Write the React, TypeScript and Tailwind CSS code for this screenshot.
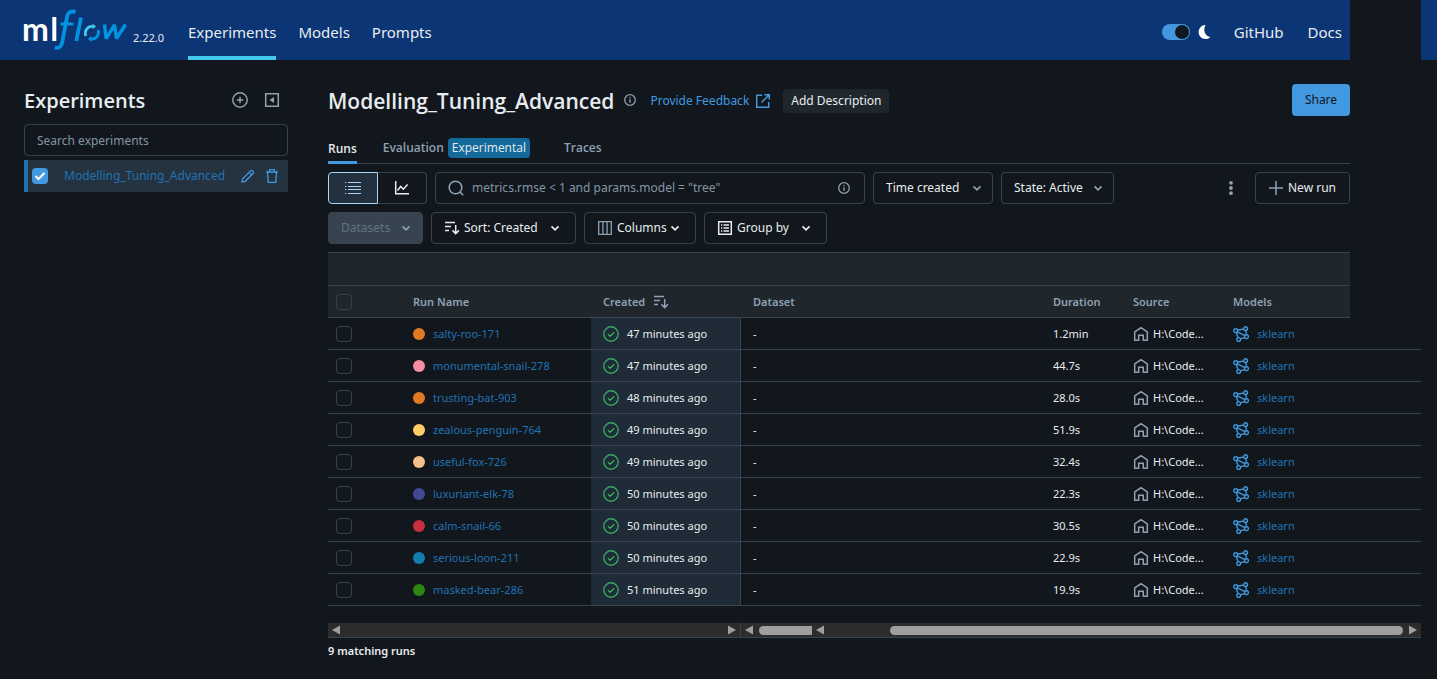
import type { ReactNode } from "react";

type Run = { name: string; color: string; created: string; duration: string };

const runs: Run[] = [
  { name: "salty-roo-171", color: "bg-[#e07b22]", created: "47 minutes ago", duration: "1.2min" },
  { name: "monumental-snail-278", color: "bg-[#f78da0]", created: "47 minutes ago", duration: "44.7s" },
  { name: "trusting-bat-903", color: "bg-[#e07b22]", created: "48 minutes ago", duration: "28.0s" },
  { name: "zealous-penguin-764", color: "bg-[#ffcc66]", created: "49 minutes ago", duration: "51.9s" },
  { name: "useful-fox-726", color: "bg-[#f5c08a]", created: "49 minutes ago", duration: "32.4s" },
  { name: "luxuriant-elk-78", color: "bg-[#434a93]", created: "50 minutes ago", duration: "22.3s" },
  { name: "calm-snail-66", color: "bg-[#c8303f]", created: "50 minutes ago", duration: "30.5s" },
  { name: "serious-loon-211", color: "bg-[#137dae]", created: "50 minutes ago", duration: "22.9s" },
  { name: "masked-bear-286", color: "bg-[#308613]", created: "51 minutes ago", duration: "19.9s" },
];

function Icon({ children, className = "" }: { children: ReactNode; className?: string }) {
  return (
    <svg
      viewBox="0 0 16 16"
      width="16"
      height="16"
      fill="none"
      stroke="currentColor"
      strokeWidth="1.5"
      aria-hidden="true"
      className={`shrink-0 ${className}`}
    >
      {children}
    </svg>
  );
}

const Chevron = ({ className = "" }: { className?: string }) => (
  <Icon className={className}>
    <path d="M4.500 6.300 8 9.800l3.500-3.500" strokeWidth="1.700" />
  </Icon>
);

const InfoIcon = ({ className = "" }: { className?: string }) => (
  <Icon className={className}>
    <circle cx="8" cy="8" r="5.300" strokeWidth="1.300" />
    <path d="M8 7.300v3.400M8 5v1.300" strokeWidth="1.400" />
  </Icon>
);

const SortIcon = ({ className = "" }: { className?: string }) => (
  <Icon className={className}>
    <path d="M1 2.500h10M1 6.500h6M1 10.500h4M11.700 5v8.600M8.500 10.400l3.200 3.200 3.200-3.200" />
  </Icon>
);

function Logo() {
  return (
    <svg viewBox="0 0 106 42" width="106" height="42" role="img" aria-label="mlflow" className="shrink-0 overflow-visible">
      <text x="-2" y="32" fontSize="32" fontFamily="Lato, sans-serif" fontWeight="700" fill="#ffffff">m</text>
      <rect x="28.300" y="8" width="4" height="24" fill="#ffffff" />
      <g fill="none" stroke="#0194e2">
        <path d="M51.500 3.200c-4.500-1.700-7.500-.2-8.500 4.800L38.300 33c-1 5-3.300 6.700-7.500 5.500" strokeWidth="3.800" />
        <path d="M36.500 15h13" strokeWidth="3" />
        <path d="M57 8.500l-4.700 23.500" strokeWidth="3.800" />
        <path d="M80.500 15.500l1.600 14L90.500 16l2 13.500L101.500 15.500" strokeWidth="3.400" strokeLinejoin="bevel" />
      </g>
      <path d="M74.100 21a6.700 6.700 0 0 1-6.800 9" fill="none" stroke="#0194e2" strokeWidth="2.800" />
      <path d="M67.500 27.200v5.600l-3.700-3z" fill="#0194e2" />
      <path d="M62 27a6.700 6.700 0 0 1 6.700-9.600" fill="none" stroke="#43c9ed" strokeWidth="2.800" />
      <path d="M68.500 14.600v5.600l3.700-2.600z" fill="#43c9ed" />
    </svg>
  );
}

function Header() {
  return (
    <header className="flex h-15 bg-[#0b3574]">
      <div className="flex min-w-0 flex-1 items-center pl-6 pr-2">
        <Logo />
        <span className="ml-[3px] w-8 pt-4 text-[11px] leading-4 text-[#e8ecf0]">2.22.0</span>
        <nav className="ml-[23px] flex gap-[22px] self-stretch text-[15px] leading-5 text-[#e8ecf0]">
          <a href="#experiments" className="flex items-center border-b-4 border-[#43c9ed] pt-2">Experiments</a>
          <a href="#models" className="flex items-center pt-1">Models</a>
          <a href="#prompts" className="flex items-center pt-1">Prompts</a>
        </nav>
        <div className="ml-auto flex items-center pt-1 text-[15px] leading-5 text-[#e8ecf0]">
          <button type="button" role="switch" aria-checked="true" aria-label="Dark mode" className="flex h-4 w-7 items-center justify-end rounded-full bg-[#4299e0] p-px">
            <span className="size-3.5 rounded-full bg-[#11171c]" />
          </button>
          <svg viewBox="0 0 14 16" width="14" height="16" aria-hidden="true" className="ml-2 fill-white">
            <path d="M7.500 1a7 7 0 1 0 5 12C7.500 12.500 4.500 6.500 7.500 1z" />
          </svg>
          <a href="#github" className="ml-[22px]">GitHub</a>
          <a href="#docs" className="ml-6">Docs</a>
        </div>
      </div>
      <div className="w-[71px] bg-[#11171c]" />
      <div className="w-4" />
    </header>
  );
}

function Sidebar() {
  return (
    <aside className="w-[264px] shrink-0">
      <div className="flex h-8 items-center text-[#8fa1b3]">
        <h2 className="flex-1 pt-0.5 font-['Open_Sans',sans-serif] text-[20px] leading-7 font-semibold text-[#e8ecf0]">Experiments</h2>
        <button type="button" aria-label="Create experiment" className="mr-4">
          <Icon>
            <circle cx="8" cy="8" r="7.200" />
            <path d="M8 4.700v6.600M4.700 8h6.600" />
          </Icon>
        </button>
        <button type="button" aria-label="Collapse sidebar" className="mr-2">
          <Icon>
            <path d="M1.700 1.700h12.600v12.600H1.700z" />
            <path d="M10 5v6L5.500 8z" fill="currentColor" stroke="none" />
          </Icon>
        </button>
      </div>
      <input
        type="text"
        aria-label="Search experiments"
        placeholder="Search experiments"
        className="mt-2 h-8 w-full rounded-sm border border-[#37444f] bg-transparent px-3 placeholder:text-[#8396a5]"
      />
      <div className="mt-1 flex h-8 items-center border-l-4 border-[#2272b4] bg-[#24333f] pl-1 pr-2">
        <span className="grid size-4">
          <input type="checkbox" defaultChecked aria-label="Select Modelling_Tuning_Advanced" className="col-start-1 row-start-1 size-4 appearance-none rounded-sm bg-[#4299e0]" />
          <Icon className="pointer-events-none col-start-1 row-start-1 text-white">
            <path d="M3.500 8l3 3 6-6" strokeWidth="2" />
          </Icon>
        </span>
        <a href="#experiment" className="ml-4 min-w-0 flex-1 text-[#2272b4]">Modelling_Tuning_Advanced</a>
        <button type="button" aria-label="Rename experiment" className="mr-2 text-[#4299e0]">
          <Icon>
            <path d="M2 14l.7-3.300 7.800-7.800a1.500 1.500 0 0 1 2.100 0l.5.500a1.500 1.500 0 0 1 0 2.100L5.300 13.300z" strokeWidth="1.300" />
            <path d="M9.200 4.400l2.400 2.400" strokeWidth="1.200" />
          </Icon>
        </button>
        <button type="button" aria-label="Delete experiment" className="text-[#4299e0]">
          <Icon>
            <path d="M2 4h12M5.500 4V1.700h5V4M3.500 4l.7 10.300h7.600L12.500 4" strokeWidth="1.300" />
          </Icon>
        </button>
      </div>
    </aside>
  );
}

function Toolbar() {
  const box = "flex h-8 shrink-0 items-center rounded-sm border border-[#37444f]";
  return (
    <>
      <div className="mt-2 flex gap-2">
        <div className="flex">
          <button type="button" aria-label="Table view" className="flex h-8 w-[50px] items-center justify-center rounded-l-sm border border-[#a7d5f5] bg-[#22313d] text-[#a7d5f5]">
            <Icon>
              <path d="M3 2.500H16M3 6.500H16M3 9.500H16M3 13.500H16" strokeWidth="1.200" />
              <path d="M0 2.500h1.300M0 6.500h1.300M0 9.500h1.300M0 13.500h1.300" strokeWidth="1.200" />
            </Icon>
          </button>
          <button type="button" aria-label="Chart view" className="flex h-8 w-[49px] items-center justify-center rounded-r-sm border border-l-0 border-[#37444f]">
            <Icon>
              <path d="M1.700 1v12.800H15" />
              <path d="M3.500 10.500l3.200-4 2.600 2.700 4.300-4.700" />
            </Icon>
          </button>
        </div>
        <div className={`${box} min-w-0 max-w-[430px] flex-1 px-3`}>
          <Icon className="text-[#8fa1b3]">
            <circle cx="7.500" cy="7.500" r="6.300" strokeWidth="1.600" />
            <path d="M12 12l3.200 3.200" strokeWidth="1.600" />
          </Icon>
          <input
            type="text"
            aria-label="Search runs"
            placeholder={'metrics.rmse < 1 and params.model = "tree"'}
            className="ml-2 min-w-0 flex-1 bg-transparent placeholder:text-[#8396a5]"
          />
          <InfoIcon className="text-[#8fa1b3]" />
        </div>
        <div className="relative">
          <select aria-label="Time created" className={`${box} w-[120px] appearance-none px-3`}>
            <option>Time created</option>
          </select>
          <Chevron className="pointer-events-none absolute top-2 right-2 text-[#8fa1b3]" />
        </div>
        <div className="relative">
          <select aria-label="State" className={`${box} w-[113px] appearance-none px-3`}>
            <option>State: Active</option>
          </select>
          <Chevron className="pointer-events-none absolute top-2 right-2 text-[#8fa1b3]" />
        </div>
        <button type="button" aria-label="More actions" className="ml-auto px-2 text-[#8fa1b3]">
          <Icon>
            <g fill="currentColor" stroke="none">
              <circle cx="8" cy="2.800" r="1.900" />
              <circle cx="8" cy="8" r="1.900" />
              <circle cx="8" cy="13.200" r="1.900" />
            </g>
          </Icon>
        </button>
        <button type="button" className={`${box} w-[95px] gap-1 pl-3`}>
          <Icon className="text-[#8fa1b3]">
            <path d="M8 1v14M1 8h14" />
          </Icon>
          New run
        </button>
      </div>
      <div className="mt-2 flex gap-2">
        <button type="button" disabled className={`${box} w-[95px] justify-between bg-[#37444f] pl-3 pr-2 text-[#5f7281]`}>
          Datasets
          <Chevron className="text-[#8fa1b3]" />
        </button>
        <button type="button" aria-haspopup="menu" className={`${box} w-[145px] gap-1 px-3`}>
          <SortIcon />
          Sort: Created
          <Chevron className="ml-auto" />
        </button>
        <button type="button" aria-haspopup="menu" className={`${box} w-[112px] gap-1 px-3`}>
          <Icon className="text-[#8fa1b3]">
            <path d="M1.700 1.700h12.600v12.600H1.700zM5.900 1.700v12.600M10.100 1.700v12.600" strokeWidth="1.300" />
          </Icon>
          <span className="flex items-center">
            Columns
            <Chevron />
          </span>
        </button>
        <button type="button" aria-haspopup="menu" className={`${box} w-[123px] gap-1 px-3`}>
          <Icon>
            <path d="M1.700 1.700h12.600v12.600H1.700z" />
            <path d="M6.500 5H12M6.500 8H12M6.500 11H12M4 5h1.300M4 8h1.300M4 11h1.300" strokeWidth="1.300" />
          </Icon>
          Group by
          <Chevron className="ml-auto" />
        </button>
      </div>
    </>
  );
}

const RowCheckbox = ({ label }: { label: string }) => (
  <input type="checkbox" aria-label={label} className="block size-4 appearance-none rounded-sm border border-[#37444f]" />
);

function RunsTable() {
  const head = "border-b border-[#37444f] bg-[#1f272d] text-left font-semibold text-[#8fa1b3]";
  const cell = "border-b border-[#37444f]";
  return (
    <table className="mt-2 w-full table-fixed border-separate border-spacing-0 text-[11px]">
      <colgroup>
        <col className="w-[75px]" />
        <col className="w-[188px]" />
        <col className="w-[150px]" />
        <col />
        <col className="w-[80px]" />
        <col className="w-[100px]" />
        <col className="w-[127px]" />
        <col className="w-[71px]" />
      </colgroup>
      <thead>
        <tr className="h-[34px]">
          <td colSpan={7} className="border-y border-[#37444f] bg-[#1f272d]" />
          <td />
        </tr>
        <tr className="h-8">
          <th className={`${head} pl-2`}>
            <RowCheckbox label="Select all runs" />
          </th>
          <th className={`${head} pl-[10px]`}>Run Name</th>
          <th className={`${head} pl-3`}>
            <span className="flex items-center gap-2">
              Created
              <SortIcon />
            </span>
          </th>
          <th className={`${head} pl-3`}>Dataset</th>
          <th className={`${head} pl-[10px]`}>Duration</th>
          <th className={`${head} pl-[10px]`}>Source</th>
          <th className={`${head} pl-[10px]`}>Models</th>
          <td />
        </tr>
      </thead>
      <tbody>
        {runs.map((run) => (
          <tr key={run.name} className="h-8">
            <td className={`${cell} pl-2`}>
              <RowCheckbox label={`Select ${run.name}`} />
            </td>
            <td className={`${cell} pl-[10px]`}>
              <a href="#run" className="flex items-center gap-2 text-[#2272b4]">
                <span className={`size-3 rounded-full ${run.color}`} />
                {run.name}
              </a>
            </td>
            <td className={`${cell} border-r bg-[#1f2b36] pl-3`}>
              <span className="flex items-center gap-2">
                <Icon className="text-[#3ba65e]">
                  <circle cx="8" cy="8" r="7.200" strokeWidth="1.400" />
                  <path d="M5 8.200l2.100 2.100L11.200 6.200" strokeWidth="1.400" />
                </Icon>
                {run.created}
              </span>
            </td>
            <td className={`${cell} pl-3`}>-</td>
            <td className={`${cell} pl-[10px]`}>{run.duration}</td>
            <td className={`${cell} pl-[10px]`}>
              <span className="flex items-center gap-1">
                <Icon className="text-[#8fa1b3]">
                  <path d="M1.700 14.300V6L8 1.700 14.300 6v8.300h-4V9.200H5.700v5.100z" />
                </Icon>
                H:\Code...
              </span>
            </td>
            <td colSpan={2} className={`${cell} pl-[10px]`}>
              <a href="#model" className="flex items-center gap-2 text-[#2272b4]">
                <Icon className="text-[#4299e0]">
                  <g strokeWidth="1.400">
                    <circle cx="2.700" cy="4.700" r="1.900" />
                    <circle cx="12.600" cy="2.600" r="1.900" />
                    <circle cx="13.500" cy="10.700" r="1.900" />
                    <circle cx="5.700" cy="13.500" r="1.900" />
                    <path d="M4.600 4.300l6.100-1.300M12.800 4.500l.5 4.300M11.700 11.400l-4.200 1.500M3.300 6.500l1.800 5.200M4.300 5.800l7.600 3.900" />
                  </g>
                </Icon>
                sklearn
              </a>
            </td>
          </tr>
        ))}
      </tbody>
    </table>
  );
}

const ScrollArrow = ({ right = false }: { right?: boolean }) => (
  <svg viewBox="0 0 8 10" width="8" height="10" aria-hidden="true" className="shrink-0 fill-[#9f9f9f]">
    <path d={right ? "M0 .5 8 5 0 9.500z" : "M8 .5 0 5l8 4.500z"} />
  </svg>
);

function ScrollTracks() {
  return (
    <div className="mt-[17px] flex h-[15px] border-b border-[#37444f] bg-[#2c2c2c]">
      <div className="flex w-[413px] items-center justify-between border-r border-[#37444f] px-1">
        <ScrollArrow />
        <ScrollArrow right />
      </div>
      <div className="flex w-[71px] items-center justify-between pl-1">
        <ScrollArrow />
        <div className="h-[9px] w-[53px] rounded-l-full bg-[#9f9f9f]" />
      </div>
      <div className="flex flex-1 items-center px-1">
        <ScrollArrow />
        <div className="mr-1.5 ml-[66px] h-[9px] flex-1 rounded-full bg-[#9f9f9f]" />
        <ScrollArrow right />
      </div>
    </div>
  );
}

export default function App() {
  return (
    <div className="min-h-screen bg-[#11171c] font-['Noto_Sans',sans-serif] text-[12px] leading-5 text-[#e8ecf0]">
      <Header />
      <div className="flex gap-10 pt-6 pr-4 pl-6">
        <Sidebar />
        <main className="min-w-0 flex-1">
          <div className="mr-[71px]">
            <div className="flex h-8 items-center">
              <h1 className="pt-0.5 font-['Open_Sans',sans-serif] text-[21px] leading-7 font-semibold">Modelling_Tuning_Advanced</h1>
              <InfoIcon className="ml-2 text-[#8fa1b3]" />
              <a href="#feedback" className="ml-3 flex items-center gap-1.5 pt-0.5 text-[#4299e0]">
                Provide Feedback
                <Icon>
                  <path d="M7 2.300H1.700v12h12V9M9.500 1.700h4.800v4.800M14.300 1.700L6.500 9.500" />
                </Icon>
              </a>
              <button type="button" className="mt-0.5 ml-3 h-6 rounded-sm bg-[#1f272d] px-2">Add Description</button>
              <button type="button" className="ml-auto h-8 w-[58px] rounded-sm bg-[#4299e0] text-[#11171c]">Share</button>
            </div>
            <nav className="mt-4 flex h-8 border-b border-[#37444f] font-['Open_Sans',sans-serif] font-semibold text-[#8fa1b3]">
              <a href="#runs" className="flex h-8 items-center border-b-3 border-[#4299e0] pt-1 text-[#e8ecf0]">Runs</a>
              <a href="#evaluation" className="ml-[26px] flex items-center gap-1 pt-px">
                Evaluation
                <span className="rounded-sm bg-[#12699a] px-1 font-medium text-[#e8ecf0]">Experimental</span>
              </a>
              <a href="#traces" className="ml-[34px] flex items-center pt-px">Traces</a>
            </nav>
            <Toolbar />
          </div>
          <RunsTable />
          <ScrollTracks />
          <p className="mt-[3px] text-[11px] font-semibold">9 matching runs</p>
        </main>
      </div>
    </div>
  );
}
